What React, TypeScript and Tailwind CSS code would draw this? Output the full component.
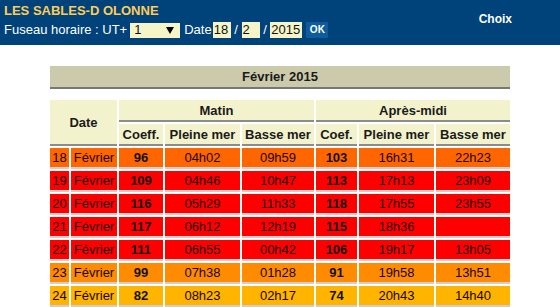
import React from "react"

interface TideRow {
    day: number
    bg: string
    am: [string, string, string]
    pm: [string, string, string]
}

const rows: TideRow[] = [
    { day: 18, bg: "bg-[#ff6600]", am: ["96", "04h02", "09h59"], pm: ["103", "16h31", "22h23"] },
    { day: 19, bg: "bg-[#ff0000]", am: ["109", "04h46", "10h47"], pm: ["113", "17h13", "23h09"] },
    { day: 20, bg: "bg-[#ff0000]", am: ["116", "05h29", "11h33"], pm: ["118", "17h55", "23h55"] },
    { day: 21, bg: "bg-[#ff0000]", am: ["117", "06h12", "12h19"], pm: ["115", "18h36", ""] },
    { day: 22, bg: "bg-[#ff0000]", am: ["111", "06h55", "00h42"], pm: ["106", "19h17", "13h05"] },
    { day: 23, bg: "bg-[#ff8c00]", am: ["99", "07h38", "01h28"], pm: ["91", "19h58", "13h51"] },
    { day: 24, bg: "bg-[#ffb400]", am: ["82", "08h23", "02h17"], pm: ["74", "20h43", "14h40"] },
]

const head = "p-0 bg-[#f2f2cc] border-b-2 border-[#8c8c8c] font-bold text-[#1a1a1a] h-[22px]"
const cell = "p-0 h-[21px] border-b-2 border-[#cfcfcf] text-center"

function DateInput({ value, width }: { value: string; width: string }) {
    return (
        <span className={`${width} h-[16px] bg-[#f5f5c8] text-[#111] pl-[1px] leading-[16px] inline-block`}>
            {value}
        </span>
    )
}

export default function App() {
    return (
        <div className="w-[560px] h-[307px] overflow-hidden bg-white text-[13px] font-['Liberation_Sans',Arial,sans-serif]">
            <div className="h-[45px] bg-[#00427a] px-[4px] flex justify-between">
                <div>
                    <div className="pt-[3px] leading-[15px] font-bold text-[#ffcc55]">LES SABLES-D OLONNE</div>
                    <div className="mt-[4px] h-[16px] flex items-center text-white leading-[16px] whitespace-pre">
                        <span>Fuseau horaire : UT+</span>
                        <span className="ml-[3px] w-[50px] h-[15px] bg-[#f5f5c8] text-[#111] pl-[4px] flex items-center justify-between pr-[6px]">
                            <span>1</span>
                            <svg width="8" height="7" viewBox="0 0 8 7"><path d="M0 0h8L4 7z" fill="#000" /></svg>
                        </span>
                        <span className="ml-[4px]">Date</span>
                        <span className="ml-[1px]"><DateInput value="18" width="w-[18px]" /></span>
                        <span> / </span>
                        <DateInput value="2" width="w-[18px]" />
                        <span> / </span>
                        <DateInput value="2015" width="w-[32px]" />
                        <span className="ml-[4px] w-[22px] h-[16px] bg-[#0d5c9e] text-white font-bold text-[10px] leading-[16px] text-center rounded-[1px]">OK</span>
                    </div>
                </div>
                <div className="pt-[10px] pr-[44px] font-bold text-[12px] text-white">Choix</div>
            </div>

            <div className="w-[460px] mx-auto mt-[21px] h-[23px] bg-[#cbcbab] border-b-2 border-[#777] text-center font-bold leading-[21px] text-[#1a1a1a]">
                Février 2015
            </div>

            <table className="mx-auto mt-[9px] w-[464px] table-fixed border-separate border-spacing-[2px] leading-[19px]">
                <colgroup>
                    <col className="w-[19px]" />
                    <col className="w-[46px]" />
                    <col className="w-[44px]" />
                    <col className="w-[75px]" />
                    <col className="w-[72px]" />
                    <col className="w-[41px]" />
                    <col className="w-[75px]" />
                    <col className="w-[74px]" />
                </colgroup>
                <thead>
                    <tr>
                        <th rowSpan={2} colSpan={2} className={head}>Date</th>
                        <th colSpan={3} className={head}>Matin</th>
                        <th colSpan={3} className={head}>Après-midi</th>
                    </tr>
                    <tr>
                        <th className={head}>Coeff.</th>
                        <th className={head}>Pleine mer</th>
                        <th className={head}>Basse mer</th>
                        <th className={head}>Coef.</th>
                        <th className={head}>Pleine mer</th>
                        <th className={head}>Basse mer</th>
                    </tr>
                </thead>
                <tbody className="text-[#1a0505]">
                    {rows.map((row) => (
                        <tr key={row.day} className={row.bg}>
                            <td className={cell}>{row.day}</td>
                            <td className={cell}>Février</td>
                            <td className={`${cell} font-bold text-[#111]`}>{row.am[0]}</td>
                            <td className={cell}>{row.am[1]}</td>
                            <td className={cell}>{row.am[2]}</td>
                            <td className={`${cell} font-bold text-[#111]`}>{row.pm[0]}</td>
                            <td className={cell}>{row.pm[1]}</td>
                            <td className={cell}>{row.pm[2]}</td>
                        </tr>
                    ))}
                </tbody>
            </table>
        </div>
    )
}
